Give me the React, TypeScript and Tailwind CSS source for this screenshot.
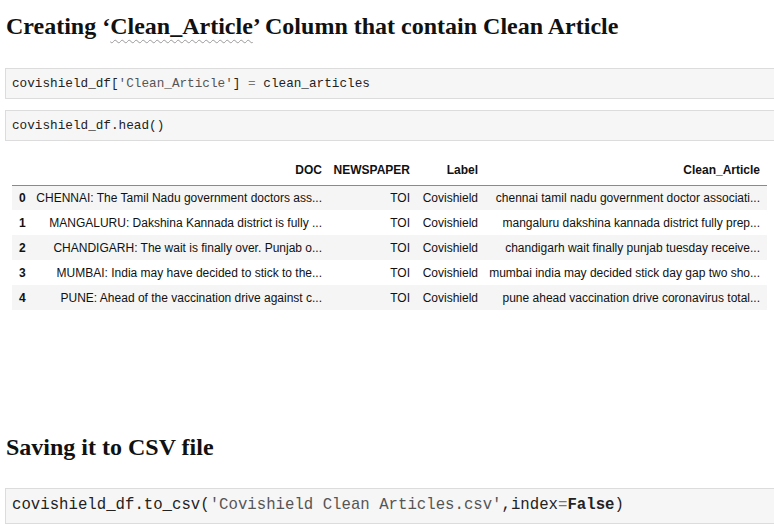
import React from "react";

const rows = [
  ["0", "CHENNAI: The Tamil Nadu government doctors ass...", "TOI", "Covishield", "chennai tamil nadu government doctor associati..."],
  ["1", "MANGALURU: Dakshina Kannada district is fully ...", "TOI", "Covishield", "mangaluru dakshina kannada district fully prep..."],
  ["2", "CHANDIGARH: The wait is finally over. Punjab o...", "TOI", "Covishield", "chandigarh wait finally punjab tuesday receive..."],
  ["3", "MUMBAI: India may have decided to stick to the...", "TOI", "Covishield", "mumbai india may decided stick day gap two sho..."],
  ["4", "PUNE: Ahead of the vaccination drive against c...", "TOI", "Covishield", "pune ahead vaccination drive coronavirus total..."],
];

export default function App() {
  return (
    <div className="w-[774px] h-[529px] bg-white overflow-hidden flex flex-col">
      <h1 className="mt-[12px] ml-[6px] h-[28px] leading-[28px] text-[24px] font-bold text-[#111] whitespace-nowrap" style={{ fontFamily: '"Liberation Serif", "Times New Roman", serif' }}>
        Creating ‘<span className="underline decoration-wavy decoration-[#9a9a9a] decoration-1 underline-offset-[5px]">Clean_Article</span>’ Column that contain Clean Article
      </h1>

      <div className="mt-[28px] ml-[5px] h-[31px] border border-r-0 border-[#dcdcdc] bg-[#f6f6f6] flex items-center pl-[6px] text-[12.7px] text-[#222] whitespace-pre" style={{ fontFamily: '"Liberation Mono", "DejaVu Sans Mono", monospace' }}>
        <span>covishield_df[</span><span className="text-[#555]">'Clean_Article'</span><span>] </span><span className="text-[#777]">=</span><span> clean_articles</span>
      </div>

      <div className="mt-[11px] ml-[5px] h-[31px] border border-r-0 border-[#dcdcdc] bg-[#f6f6f6] flex items-center pl-[6px] text-[12.7px] text-[#222] whitespace-pre" style={{ fontFamily: '"Liberation Mono", "DejaVu Sans Mono", monospace' }}>
        covishield_df.head()
      </div>

      <table className="mt-[14px] ml-[12px] w-[755px] border-collapse text-[12px] text-[#111] table-fixed" style={{ fontFamily: '"Liberation Sans", Arial, sans-serif' }}>
        <colgroup>
          <col className="w-[18px]" />
          <col className="w-[300px]" />
          <col className="w-[86px]" />
          <col className="w-[68px]" />
          <col />
        </colgroup>
        <thead>
          <tr className="h-[30px] border-b border-[#8a8a8a]">
            <th className="text-right pr-[6px] font-bold"></th>
            <th className="text-right pr-[8px] font-bold">DOC</th>
            <th className="text-right pr-[6px] font-bold">NEWSPAPER</th>
            <th className="text-right pr-[6px] font-bold">Label</th>
            <th className="text-right pr-[7px] font-bold">Clean_Article</th>
          </tr>
        </thead>
        <tbody>
          {rows.map((r, i) => (
            <tr key={i} className={i % 2 === 0 ? "h-[25px] bg-[#f5f5f5]" : "h-[25px] bg-white"}>
              <td className="text-left pl-[7px] font-bold">{r[0]}</td>
              <td className="text-right pr-[8px] whitespace-nowrap">{r[1]}</td>
              <td className="text-right pr-[6px]">{r[2]}</td>
              <td className="text-right pr-[6px]">{r[3]}</td>
              <td className="text-right pr-[7px] whitespace-nowrap">{r[4]}</td>
            </tr>
          ))}
        </tbody>
      </table>

      <h2 className="mt-[123px] ml-[6px] h-[28px] leading-[28px] text-[24px] font-bold text-[#111] whitespace-nowrap" style={{ fontFamily: '"Liberation Serif", "Times New Roman", serif' }}>
        Saving it to CSV file
      </h2>

      <div className="mt-[27px] ml-[5px] h-[36px] border border-r-0 border-[#dcdcdc] bg-[#f6f6f6] flex items-center pl-[6px] text-[15.7px] text-[#222] whitespace-pre" style={{ fontFamily: '"Liberation Mono", "DejaVu Sans Mono", monospace' }}>
        <span>covishield_df.to_csv(</span><span className="text-[#555]">'Covishield Clean Articles.csv'</span><span>,index</span><span className="text-[#777]">=</span><span className="font-bold">False</span><span>)</span>
      </div>
    </div>
  );
}
